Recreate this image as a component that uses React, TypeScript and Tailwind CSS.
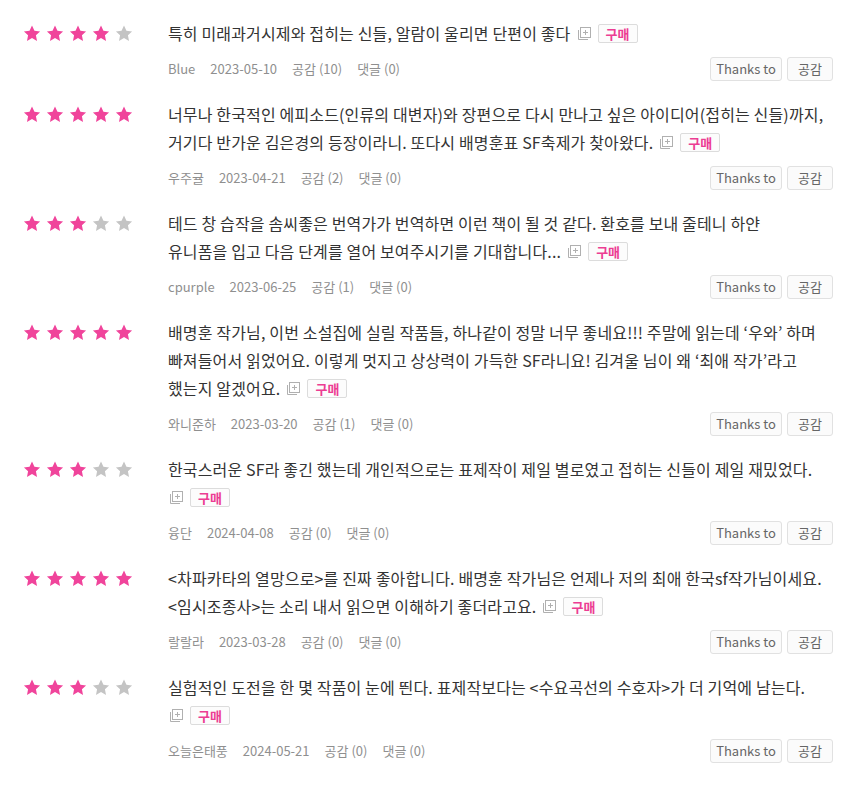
import React from "react";

type Review = {
  stars: number;
  lines: string[];
  user: string;
  date: string;
  likes: number;
  comments: number;
};

const reviews: Review[] = [
  {
    stars: 4,
    lines: ["특히 미래과거시제와 접히는 신들, 알람이 울리면 단편이 좋다"],
    user: "Blue",
    date: "2023-05-10",
    likes: 10,
    comments: 0,
  },
  {
    stars: 5,
    lines: [
      "너무나 한국적인 에피소드(인류의 대변자)와 장편으로 다시 만나고 싶은 아이디어(접히는 신들)까지,",
      "거기다 반가운 김은경의 등장이라니. 또다시 배명훈표 SF축제가 찾아왔다.",
    ],
    user: "우주귤",
    date: "2023-04-21",
    likes: 2,
    comments: 0,
  },
  {
    stars: 3,
    lines: [
      "테드 창 습작을 솜씨좋은 번역가가 번역하면 이런 책이 될 것 같다. 환호를 보내 줄테니 하얀",
      "유니폼을 입고 다음 단계를 열어 보여주시기를 기대합니다...",
    ],
    user: "cpurple",
    date: "2023-06-25",
    likes: 1,
    comments: 0,
  },
  {
    stars: 5,
    lines: [
      "배명훈 작가님, 이번 소설집에 실릴 작품들, 하나같이 정말 너무 좋네요!!! 주말에 읽는데 ‘우와’ 하며",
      "빠져들어서 읽었어요. 이렇게 멋지고 상상력이 가득한 SF라니요! 김겨울 님이 왜 ‘최애 작가’라고",
      "했는지 알겠어요.",
    ],
    user: "와니준하",
    date: "2023-03-20",
    likes: 1,
    comments: 0,
  },
  {
    stars: 3,
    lines: [
      "한국스러운 SF라 좋긴 했는데 개인적으로는 표제작이 제일 별로였고 접히는 신들이 제일 재밌었다.",
      "",
    ],
    user: "융단",
    date: "2024-04-08",
    likes: 0,
    comments: 0,
  },
  {
    stars: 5,
    lines: [
      "<차파카타의 열망으로>를 진짜 좋아합니다. 배명훈 작가님은 언제나 저의 최애 한국sf작가님이세요.",
      "<임시조종사>는 소리 내서 읽으면 이해하기 좋더라고요.",
    ],
    user: "랄랄라",
    date: "2023-03-28",
    likes: 0,
    comments: 0,
  },
  {
    stars: 3,
    lines: [
      "실험적인 도전을 한 몇 작품이 눈에 띈다. 표제작보다는 <수요곡선의 수호자>가 더 기억에 남는다.",
      "",
    ],
    user: "오늘은태풍",
    date: "2024-05-21",
    likes: 0,
    comments: 0,
  },
];

const Star = ({ on }: { on: boolean }) => (
  <svg width="18" height="17" viewBox="0 0 24 23" className="shrink-0">
    <path
      d="M12 0.8l3.3 7 7.6 0.9-5.6 5.2 1.5 7.6L12 17.7l-6.8 3.8 1.5-7.6L1.1 8.7l7.6-0.9z"
      fill={on ? "#f0449b" : "#c4c4c4"}
    />
  </svg>
);

const ExpandIcon = () => (
  <svg width="13" height="13" viewBox="0 0 13 13" className="shrink-0">
    <path d="M0.5 3v9.5H10" fill="none" stroke="#b0b0b0" />
    <rect x="2.5" y="0.5" width="10" height="10" fill="#fff" stroke="#b0b0b0" />
    <path d="M7.5 3v5M5 5.5h5" stroke="#b0b0b0" />
  </svg>
);

const Extras = () => (
  <span className="inline-flex items-center gap-[7px] align-middle ml-[7px] first:ml-[2px]">
    <ExpandIcon />
    <span className="inline-flex items-center justify-center h-[19px] w-[40px] border border-[#dcdcdc] rounded-[2px] bg-[#fcfcfc] text-[13px] font-bold tracking-normal text-[#ec3d93] leading-none">
      구매
    </span>
  </span>
);

const ReviewRow = ({ r }: { r: Review }) => (
  <div className="flex pb-[19px]">
    <div className="w-[168px] shrink-0 pl-[23px] h-[28px] flex items-center gap-[5px]">
      {[1, 2, 3, 4, 5].map((n) => (
        <Star key={n} on={n <= r.stars} />
      ))}
    </div>
    <div className="flex-1 pr-[10px]">
      <div className="text-[16px] tracking-[0.15px] leading-[28px] text-[#333]">
        {r.lines.map((line, i) => {
          const last = i === r.lines.length - 1;
          return (
            <div key={i} className="whitespace-nowrap h-[28px] flex items-center">
              {line && <span>{line}</span>}
              {last && <Extras />}
            </div>
          );
        })}
      </div>
      <div className="mt-[10px] h-[24px] flex items-center justify-between">
        <div className="flex items-center gap-[15px] text-[13px] text-[#8f8f8f]">
          <span>{r.user}</span>
          <span>{r.date}</span>
          <span>공감 ({r.likes})</span>
          <span>댓글 ({r.comments})</span>
        </div>
        <div className="flex gap-[5px]">
          <button className="h-[24px] w-[72px] border border-[#e1e1e1] rounded-[3px] bg-[#fbfbfb] text-[13px] text-[#666]">
            Thanks to
          </button>
          <button className="h-[24px] w-[46px] border border-[#e1e1e1] rounded-[3px] bg-[#fbfbfb] text-[13px] text-[#666]">
            공감
          </button>
        </div>
      </div>
    </div>
  </div>
);

export default function App() {
  return (
    <div
      className="w-[843px] min-h-[807px] bg-white pt-[19px]"
      style={{ fontFamily: '"Noto Sans CJK KR", "Noto Sans", sans-serif' }}
    >
      {reviews.map((r, i) => (
        <ReviewRow key={i} r={r} />
      ))}
    </div>
  );
}
